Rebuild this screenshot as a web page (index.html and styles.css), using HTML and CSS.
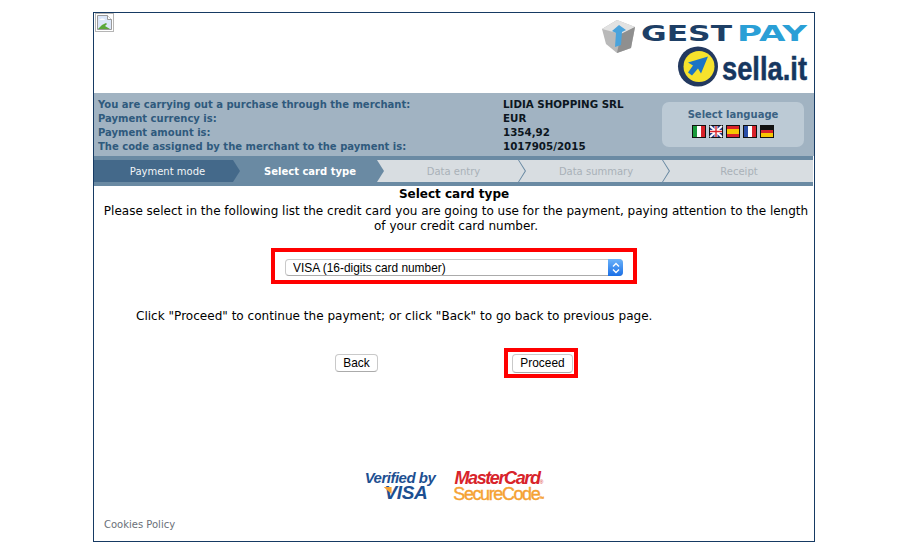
FILE: index.html
```html
<!DOCTYPE html>
<html lang="en">
<head>
<meta charset="utf-8">
<title>GestPay - Select card type</title>
<link rel="stylesheet" href="styles.css">
</head>
<body>
<div class="page">
  <header class="top">
    <svg class="broken" width="19" height="19" viewBox="0 0 19 19">
      <rect x="0.5" y="0.5" width="18" height="18" fill="#fff" stroke="#b5b5b5"/>
      <path d="M2.5 2.5h10l4 4v10h-14z" fill="#dbe7fa" stroke="#9a9a9a"/>
      <path d="M12.5 2.5v4h4" fill="#fff" stroke="#9a9a9a"/>
      <path d="M3 16l4-4 4-2 1 1-2 2 5 3z" fill="#5aa83a"/>
      <path d="M4 7c2-2 5-2 6 0z" fill="#fff"/>
    </svg>
    <div class="brands">
      <svg class="gestpay" width="206" height="37" viewBox="0 0 206 37">
        <path d="M0 12L15 3l18 7-4 21-14 5L4 27z" fill="#b9b9b9"/>
        <path d="M15 3l18 7-14 7L0 12z" fill="#e2e2e2"/>
        <path d="M19 17l14-7-4 21-14 5z" fill="#8f8f8f"/>
        <path d="M13 30l1-14-4-2 7-6 7 5-4 2-1 13z" fill="#4aa3dc"/>
        <text class="gest" x="39" y="24" textLength="91" lengthAdjust="spacingAndGlyphs">GEST</text>
        <text class="pay" x="135" y="24" textLength="70" lengthAdjust="spacingAndGlyphs">PAY</text>
      </svg>
      <svg class="sella" width="131" height="40" viewBox="0 0 131 40">
        <circle cx="21" cy="19.5" r="20" fill="#23395f"/>
        <circle cx="22" cy="19.5" r="15.5" fill="#f7e22c"/>
        <path d="M31 9.500L11 15.500l5 3-5 7 4 3 6-7 3 5z" fill="#1b74c4"/>
        <text class="sella-word" x="45" y="33" textLength="85" lengthAdjust="spacingAndGlyphs">sella.it</text>
      </svg>
    </div>
  </header>

  <section class="info">
    <dl class="facts">
      <div class="fact"><dt>You are carrying out a purchase through the merchant:</dt><dd>LIDIA SHOPPING SRL</dd></div>
      <div class="fact"><dt>Payment currency is:</dt><dd>EUR</dd></div>
      <div class="fact"><dt>Payment amount is:</dt><dd>1354,92</dd></div>
      <div class="fact"><dt>The code assigned by the merchant to the payment is:</dt><dd>1017905/2015</dd></div>
    </dl>
    <div class="lang">
      <div class="lang-title">Select language</div>
      <div class="flags">
        <svg class="flag" width="14" height="13" viewBox="0 0 14 13"><rect width="14" height="13" fill="#111"/><rect x="1" y="1" width="4" height="11" fill="#1a9a3c"/><rect x="5" y="1" width="4" height="11" fill="#fff"/><rect x="9" y="1" width="4" height="11" fill="#d8232a"/></svg>
        <svg class="flag" width="14" height="13" viewBox="0 0 14 13"><rect width="14" height="13" fill="#111"/><rect x="1" y="1" width="12" height="11" fill="#2b3f8f"/><path d="M1 1l12 11M13 1L1 12" stroke="#fff" stroke-width="2"/><path d="M7 1v11M1 6.500h12" stroke="#fff" stroke-width="3"/><path d="M7 1v11M1 6.500h12" stroke="#d8232a" stroke-width="1.400"/></svg>
        <svg class="flag" width="14" height="13" viewBox="0 0 14 13"><rect width="14" height="13" fill="#111"/><rect x="1" y="1" width="12" height="11" fill="#d8232a"/><rect x="1" y="4" width="12" height="5" fill="#f7c600"/></svg>
        <svg class="flag" width="14" height="13" viewBox="0 0 14 13"><rect width="14" height="13" fill="#111"/><rect x="1" y="1" width="4" height="11" fill="#2a4fa8"/><rect x="5" y="1" width="4" height="11" fill="#fff"/><rect x="9" y="1" width="4" height="11" fill="#d8232a"/></svg>
        <svg class="flag" width="14" height="13" viewBox="0 0 14 13"><rect width="14" height="13" fill="#111"/><rect x="1" y="5" width="12" height="3" fill="#d8232a"/><rect x="1" y="8" width="12" height="4" fill="#f7c600"/></svg>
      </div>
    </div>
  </section>

  <nav class="steps">
    <div class="step step-done">Payment mode</div>
    <div class="step step-active">Select card type</div>
    <div class="step step-todo">Data entry</div>
    <div class="step step-todo">Data summary</div>
    <div class="step step-todo step-last">Receipt</div>
  </nav>

  <main class="content">
    <h1 class="title">Select card type</h1>
    <p class="lead">Please select in the following list the credit card you are going to use for the payment, paying attention to the length of your credit card number.</p>

    <div class="select-row">
      <div class="mark mark-select">
        <div class="select-wrap">
          <select class="card-select">
            <option>VISA (16-digits card number)</option>
          </select>
          <span class="stepper">
            <svg width="14" height="16" viewBox="0 0 14 16"><path d="M4 6.500L7 3.500l3 3M4 9.500l3 3 3-3" fill="none" stroke="#fff" stroke-width="1.400"/></svg>
          </span>
        </div>
      </div>
    </div>

    <p class="hint">Click "Proceed" to continue the payment; or click "Back" to go back to previous page.</p>

    <div class="actions">
      <button class="btn btn-back" type="button">Back</button>
      <div class="mark mark-btn"><button class="btn" type="button">Proceed</button></div>
    </div>

    <div class="secure">
      <div class="vbv">
        <span class="vbv-top">Verified by</span>
        <span class="vbv-visa">VISA</span>
      </div>
      <div class="mcsc">
        <span class="mc">MasterCard<sup class="reg">®</sup></span>
        <span class="sc">SecureCode<sup class="reg">™</sup></span>
      </div>
    </div>
  </main>

  <footer class="foot">Cookies Policy</footer>
</div>
</body>
</html>
```
FILE: styles.css
```css
* { box-sizing: border-box; }
html, body { margin: 0; padding: 0; background: #fff; }
body { font-family: "DejaVu Sans", Verdana, sans-serif; color: #000; }

.page {
  width: 722px;
  height: 530px;
  margin: 12px 0 0 93px;
  border: 1px solid #163a63;
  display: flex;
  flex-direction: column;
}

.top {
  height: 80px;
  display: flex;
  justify-content: space-between;
  padding: 0 6px 0 1px;
}
.broken { display: block; }
.brands { display: flex; flex-direction: column; align-items: flex-end; padding-top: 4px; }
.gestpay { display: block; }
.sella { display: block; margin-top: -7px; overflow: visible; }
.gest, .pay { font-family: "DejaVu Sans", sans-serif; font-weight: 700; font-size: 22px; }
.gest { fill: #1d3f66; }
.pay { fill: #2a9fd6; }
.sella-word { font-family: "Liberation Sans", sans-serif; font-weight: 700; font-size: 33px; fill: #16365f; stroke: #16365f; stroke-width: 0.5px; }

.info {
  height: 63px;
  background: #a1b3c2;
  display: flex;
  justify-content: space-between;
  padding: 4px 10px 0 4px;
}
.facts { margin: 0; }
.fact { display: flex; height: 14px; line-height: 14px; font-weight: 700; }
.fact dt { width: 405px; padding-top: 1px; font-size: 10px; color: #2f5a7d; }
.fact dd { margin: 0; font-size: 10.3px; color: #0c1620; }
.lang {
  width: 142px;
  height: 45px;
  margin-top: 5px;
  border-radius: 7px;
  background: #bccad5;
  text-align: center;
  padding-top: 6px;
}
.lang-title { font-size: 10px; line-height: 13px; font-weight: 700; color: #3a6283; }
.flags { display: flex; justify-content: center; gap: 3px; margin-top: 4px; padding-right: 1px; }
.flag { display: block; }

.steps {
  height: 30px;
  background: #6a8aa3;
  padding: 4px 0;
  display: grid;
  grid-template-columns: 139px 144px 141px 144px 1fr;
  margin-right: 1px;
  flex: none;
}
.step {
  position: relative;
  height: 22px;
  padding-left: 8px;
  font-size: 10px;
  line-height: 24px;
  text-align: center;
}
.step-done { background: #44698a; color: #f2f5f7; }
.step-done::after {
  content: "";
  position: absolute;
  top: 0;
  left: 100%;
  width: 7px;
  height: 22px;
  background: #44698a;
  clip-path: polygon(0 0, 100% 50%, 0 100%);
  z-index: 1;
}
.step-active { padding-left: 10px; color: #fff; font-weight: 700; }
.step-active::after {
  content: "";
  position: absolute;
  top: 0;
  left: 100%;
  width: 7px;
  height: 22px;
  background: #6a8aa3;
  clip-path: polygon(0 0, 100% 50%, 0 100%);
  z-index: 1;
}
.step-todo { padding-left: 12px; background: #d8dde1; color: #a9b1b8; }
.step-todo::after {
  content: "";
  position: absolute;
  top: 0;
  left: 100%;
  width: 8px;
  height: 22px;
  background: #6a8aa3;
  clip-path: polygon(0 0, 1px 0, 100% 50%, 1px 100%, 0 100%, calc(100% - 1.2px) 50%);
  z-index: 1;
}
.step-last { padding-left: 3px; }
.step-last::after { display: none; }

.content { flex: 1; padding: 0 4px; text-align: center; }
.title { margin: 1px 0 0; font-size: 12px; line-height: 15px; font-weight: 700; }
.lead { margin: 2px 0 0; padding-left: 4px; font-size: 12px; line-height: 15px; }
.select-row { display: flex; justify-content: center; margin-top: 14px; }
.mark { border: 4px solid #f00; }
.mark-select { width: 366px; height: 36px; padding: 7px 10px; }
.select-wrap { position: relative; height: 17px; }
.card-select {
  display: block;
  width: 100%;
  height: 17px;
  appearance: none;
  border: 1px solid #c9c9c9;
  border-bottom-color: #ababab;
  border-radius: 4px;
  background: #fff;
  padding: 0 0 0 7px;
  font-family: "Liberation Sans", Arial, sans-serif;
  font-size: 11.9px;
  color: #000;
}
.stepper {
  position: absolute;
  right: 0;
  top: 0;
  width: 15px;
  height: 17px;
  border-radius: 0 4px 4px 0;
  background: linear-gradient(#6cb3fa, #1a6fe6);
  display: flex;
  align-items: center;
  justify-content: center;
}
.stepper svg { display: block; }

.hint { margin: 25px 0 0 38px; text-align: left; font-size: 12.06px; line-height: 15px; }
.actions { display: flex; margin: 24px 0 0 237px; align-items: center; }
.btn {
  height: 18px;
  padding: 0;
  border: 1px solid #c9c9c9;
  border-bottom-color: #ababab;
  border-radius: 4px;
  background: #fff;
  font-family: "Liberation Sans", Arial, sans-serif;
  font-size: 11.9px;
  color: #000;
}
.btn-back { width: 43px; }
.mark-btn { width: 74px; height: 30px; margin-left: 126px; padding: 0 0 0 4px; display: flex; align-items: center; }
.mark-btn .btn { flex: none; width: 61px; height: 19px; }

.secure { display: flex; justify-content: center; gap: 18px; margin: 92px 0 0 1px; align-items: flex-start; }
.vbv, .mcsc { display: flex; flex-direction: column; font-family: "Liberation Sans", Arial, sans-serif; font-weight: 700; font-style: italic; }
.vbv { align-items: center; color: #1d4f91; }
.vbv-top { font-size: 15px; line-height: 15px; letter-spacing: -0.5px; white-space: nowrap; }
.vbv-visa { position: relative; margin-left: 12px; font-size: 19px; line-height: 16px; letter-spacing: -0.4px; }
.vbv-visa::before {
  content: "";
  position: absolute;
  left: -1px;
  top: 2px;
  width: 8px;
  height: 7px;
  background: #f5a233;
  clip-path: polygon(0 0, 100% 0, 100% 100%);
}
.mc, .sc { font-size: 18px; line-height: 16px; letter-spacing: -1.4px; white-space: nowrap; }
.mc { color: #d8232a; }
.sc { color: #f5a233; font-style: normal; font-weight: 400; -webkit-text-stroke: 0.4px #f5a233; }
.reg { font-size: 5px; line-height: 0; letter-spacing: 0; vertical-align: baseline; font-weight: 400; }

.foot { height: 24px; padding: 2px 0 0 10px; font-size: 10px; color: #6a7078; }
```
